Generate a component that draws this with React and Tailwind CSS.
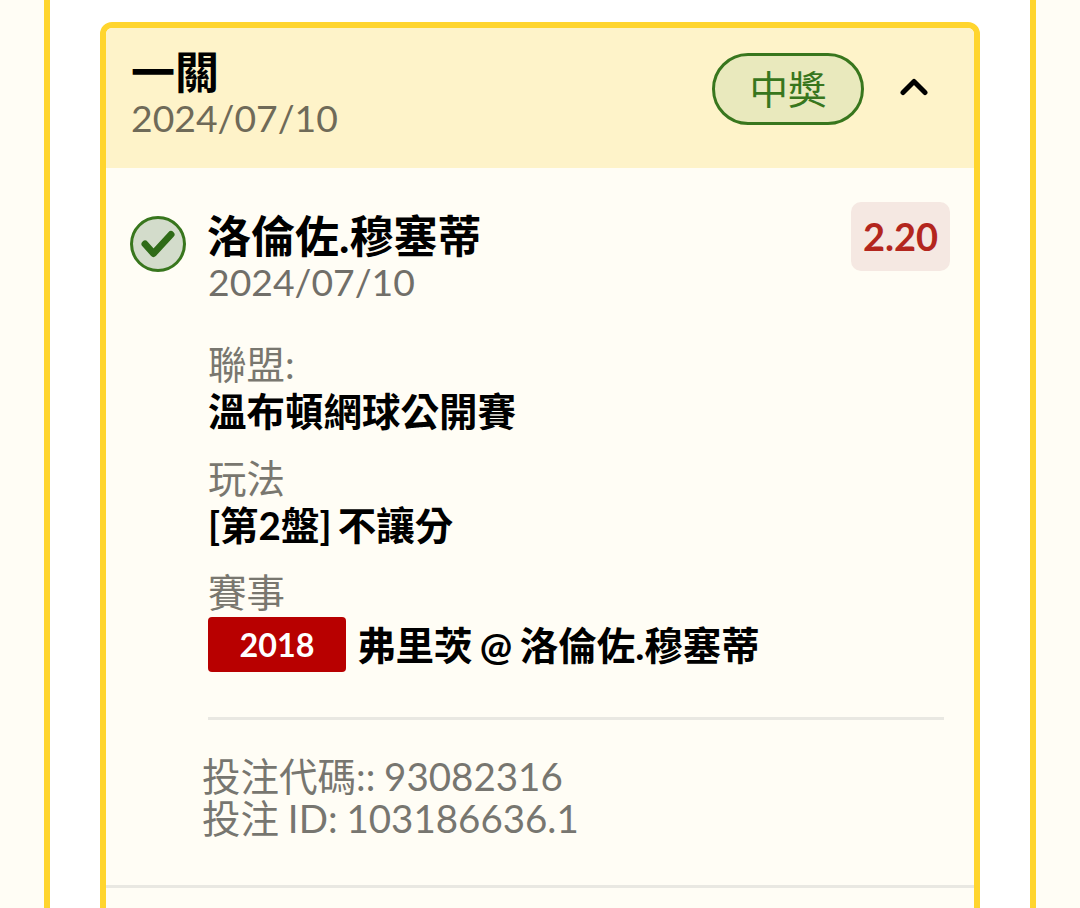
import React from "react";

function Field({ label, children, className = "" }) {
  return (
    <div className={className}>
      <div className="text-[38.5px] leading-[47px] text-[#79776f]">{label}</div>
      <div className="text-[38.5px] leading-[47px] font-bold text-black [word-spacing:-3px]">{children}</div>
    </div>
  );
}

export default function App() {
  return (
    <div className="h-[908px] w-[1080px] overflow-hidden bg-[#fffdf5] px-[44px] font-['Lato','Noto_Sans_CJK_TC',sans-serif]">
      <div className="h-full border-x-[6px] border-[#ffd52e] bg-white pl-[50px] pr-[50px] pt-[22px]">
        <div className="rounded-[12px] border-[6px] border-[#ffd52e] bg-[#fffdf5]">
          <div className="flex h-[140px] items-start justify-between rounded-t-[6px] bg-[#fef3c9] pl-[25px] pr-[45px]">
            <div className="pt-[21px]">
              <div className="text-[44px] leading-[46px] font-bold text-black">一關</div>
              <div className="text-[37.3px] leading-[45px] text-[#6f6a58]">2024/07/10</div>
            </div>
            <div className="flex items-center gap-[35px] pt-[25px]">
              <div className="flex h-[72px] w-[152px] items-center justify-center rounded-full border-[3px] border-[#38761d] bg-[#e9e9bd] text-[38.5px] leading-none text-[#38761d]">
                中獎
              </div>
              <svg width="30" height="20" viewBox="0 0 30 20" fill="none" className="mb-[7px]">
                <path d="M4 16.5 L15 5.5 L26 16.5" stroke="#000" strokeWidth="5" strokeLinecap="round" strokeLinejoin="round" />
              </svg>
            </div>
          </div>
          <div className="border-b-[3px] border-[#e9e8e2] pl-[24px] pr-[24px] pb-[46px] pt-[34px]">
            <div className="flex items-start justify-between">
              <div className="flex items-start gap-[22px]">
                <svg width="56" height="56" viewBox="0 0 56 56" className="mt-[14px] shrink-0">
                  <circle cx="28" cy="28" r="26.5" fill="#d3dccb" stroke="#38761d" strokeWidth="3" />
                  <path d="M15 28 L23.5 37.5 L41 18.5" fill="none" stroke="#2f6b18" strokeWidth="7" strokeLinecap="round" strokeLinejoin="round" />
                </svg>
                <div className="-ml-[1px]">
                  <div className="pt-[11px] text-[44px] leading-[46px] font-bold text-black">洛倫佐.穆塞蒂</div>
                  <div className="pl-[1px] text-[37.3px] leading-[45px] text-[#716f69]">2024/07/10</div>
                </div>
              </div>
              <div className="flex h-[69px] w-[99px] items-center justify-center rounded-[10px] bg-[#f5e8e2] text-[38px] font-bold text-[#b3261e]">
                2.20
              </div>
            </div>
            <div className="pl-[78px] pr-[6px]">
              <Field label="聯盟:" className="mt-[37px]">溫布頓網球公開賽</Field>
              <Field label="玩法" className="mt-[20px]">[第2盤] 不讓分</Field>
              <div className="mt-[20px]">
                <div className="text-[38.5px] leading-[47px] text-[#79776f]">賽事</div>
                <div className="mt-[1px] flex items-center gap-[11px]">
                  <span className="flex h-[55px] w-[138px] items-center justify-center rounded-[4px] bg-[#b80000] pt-[1px] text-[32.3px] font-bold text-white">2018</span>
                  <span className="pt-[1px] text-[38.5px] leading-[47px] font-bold text-black [word-spacing:-2px]">弗里茨 @ 洛倫佐.穆塞蒂</span>
                </div>
              </div>
              <div className="mt-[45px] border-t-[3px] border-[#e9e8e2]"></div>
            </div>
            <div className="-ml-[2px] pl-[74px] pt-[35px] text-[38.5px] leading-[42px] text-[#777670] [word-spacing:-1px]">
              <div>投注代碼:: 93082316</div>
              <div>投注 ID: 103186636.1</div>
            </div>
          </div>
          <div className="h-[120px]"></div>
        </div>
      </div>
    </div>
  );
}
